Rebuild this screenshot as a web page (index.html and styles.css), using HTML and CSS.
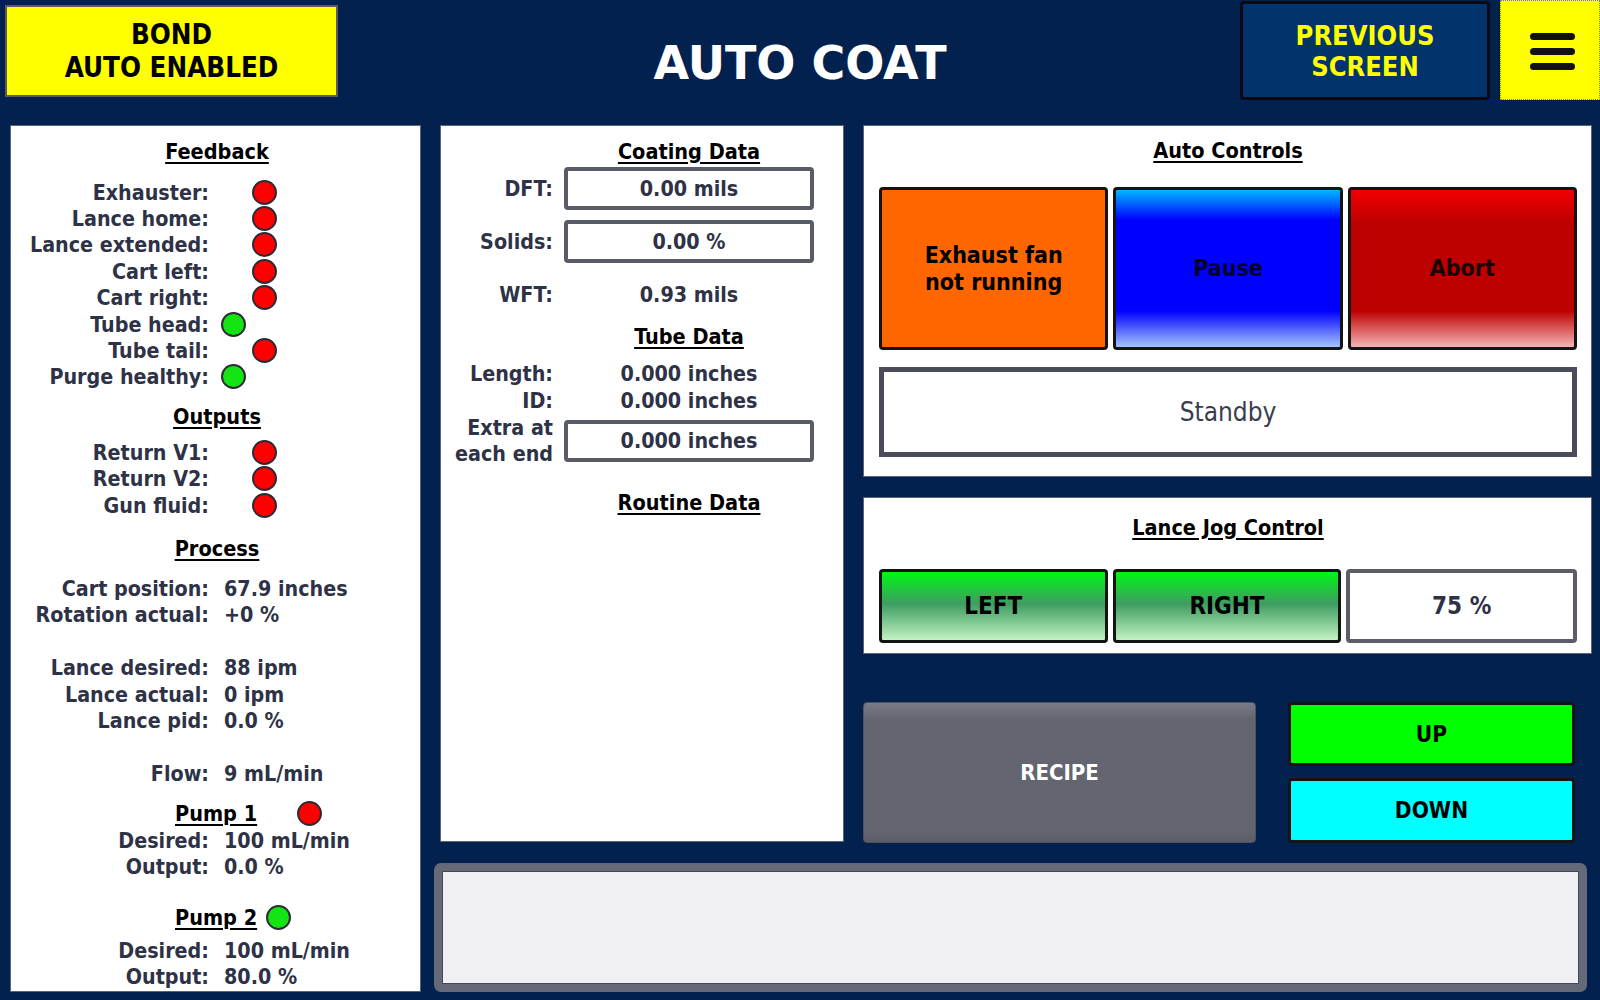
FILE: index.html
```html
<!DOCTYPE html>
<html lang="en">
<head>
    <meta charset="UTF-8">
    <meta name="viewport" content="width=device-width, initial-scale=1.0">
    <title>Auto Coat</title>
    <link rel="stylesheet" href="styles.css">
</head>
<body>

    <!-- Top bar -->
    <header class="topbar">
        <div class="mode-badge">BOND<br>AUTO ENABLED</div>
        <h1 class="screen-title">AUTO COAT</h1>
        <button class="prev-btn">PREVIOUS<br>SCREEN</button>
        <button class="menu-btn" aria-label="Menu">
            <span></span><span></span><span></span>
        </button>
    </header>

    <main class="workspace">

        <!-- Feedback / outputs / process values -->
        <section class="panel status-panel">
            <div class="group-title">Feedback</div>
            <div class="status-row"><span class="label">Exhauster:</span><span class="led off"></span></div>
            <div class="status-row"><span class="label">Lance home:</span><span class="led off"></span></div>
            <div class="status-row"><span class="label">Lance extended:</span><span class="led off"></span></div>
            <div class="status-row"><span class="label">Cart left:</span><span class="led off"></span></div>
            <div class="status-row"><span class="label">Cart right:</span><span class="led off"></span></div>
            <div class="status-row"><span class="label">Tube head:</span><span class="led on"></span></div>
            <div class="status-row"><span class="label">Tube tail:</span><span class="led off"></span></div>
            <div class="status-row"><span class="label">Purge healthy:</span><span class="led on"></span></div>

            <div class="group-title outputs">Outputs</div>
            <div class="status-row"><span class="label">Return V1:</span><span class="led off"></span></div>
            <div class="status-row"><span class="label">Return V2:</span><span class="led off"></span></div>
            <div class="status-row"><span class="label">Gun fluid:</span><span class="led off"></span></div>

            <div class="group-title process">Process</div>
            <div class="status-row"><span class="label">Cart position:</span><span class="value">67.9 inches</span></div>
            <div class="status-row"><span class="label">Rotation actual:</span><span class="value">+0 %</span></div>
            <div class="status-row spacer"></div>
            <div class="status-row"><span class="label">Lance desired:</span><span class="value">88 ipm</span></div>
            <div class="status-row"><span class="label">Lance actual:</span><span class="value">0 ipm</span></div>
            <div class="status-row"><span class="label">Lance pid:</span><span class="value">0.0 %</span></div>
            <div class="status-row spacer"></div>
            <div class="status-row"><span class="label">Flow:</span><span class="value">9 mL/min</span></div>

            <div class="pump-title pump-1"><span>Pump 1</span><span class="led off"></span></div>
            <div class="status-row"><span class="label">Desired:</span><span class="value">100 mL/min</span></div>
            <div class="status-row"><span class="label">Output:</span><span class="value">0.0 %</span></div>

            <div class="pump-title pump-2"><span>Pump 2</span><span class="led on"></span></div>
            <div class="status-row"><span class="label">Desired:</span><span class="value">100 mL/min</span></div>
            <div class="status-row"><span class="label">Output:</span><span class="value">80.0 %</span></div>
        </section>

        <div class="right-area">
            <div class="upper">

                <!-- Coating / tube / routine data -->
                <section class="panel data-panel">
                    <div class="field title-row"><span></span><span class="group-title">Coating Data</span></div>
                    <div class="field box-row"><span class="label">DFT:</span><span class="entry">0.00 mils</span></div>
                    <div class="field box-row gap-s"><span class="label">Solids:</span><span class="entry">0.00 %</span></div>
                    <div class="field text-row wft"><span class="label">WFT:</span><span class="value">0.93 mils</span></div>

                    <div class="field title-row tube"><span></span><span class="group-title">Tube Data</span></div>
                    <div class="field text-row length"><span class="label">Length:</span><span class="value">0.000 inches</span></div>
                    <div class="field text-row"><span class="label">ID:</span><span class="value">0.000 inches</span></div>
                    <div class="field box-row extra"><span class="label">Extra at<br>each end</span><span class="entry">0.000 inches</span></div>

                    <div class="field title-row routine"><span></span><span class="group-title">Routine Data</span></div>
                </section>

                <div class="control-column">
                    <section class="panel auto-panel">
                        <div class="group-title">Auto Controls</div>
                        <div class="button-row">
                            <button class="hmi-btn fault">Exhaust fan<br>not running</button>
                            <button class="hmi-btn pause">Pause</button>
                            <button class="hmi-btn abort">Abort</button>
                        </div>
                        <div class="state-box">Standby</div>
                    </section>

                    <section class="panel jog-panel">
                        <div class="group-title">Lance Jog Control</div>
                        <div class="button-row">
                            <button class="hmi-btn jog">LEFT</button>
                            <button class="hmi-btn jog">RIGHT</button>
                            <div class="speed-box">75 %</div>
                        </div>
                    </section>

                    <div class="action-row">
                        <button class="recipe-btn">RECIPE</button>
                        <div class="updown">
                            <button class="hmi-btn up">UP</button>
                            <button class="hmi-btn down">DOWN</button>
                        </div>
                    </div>
                </div>
            </div>

            <!-- Alarm / message line -->
            <div class="message-box"></div>
        </div>
    </main>

</body>
</html>
```

FILE: styles.css
```css
body {
    margin: 0;
    width: 1600px;
    height: 1000px;
    background-color: #02214f;
    font-family: "DejaVu Sans Condensed", "DejaVu Sans", sans-serif;
    font-weight: bold;
    color: #2e3246;
    overflow: hidden;
}

button {
    font-family: inherit;
    font-weight: bold;
    cursor: pointer;
}

/* Top bar */
.topbar {
    display: flex;
    align-items: flex-start;
    height: 125px;
}

.mode-badge {
    margin: 5px 0 0 5px;
    width: 329px;
    height: 88px;
    background-color: #ffff00;
    border: 2px solid #5c5c5c;
    color: #000;
    font-size: 27.5px;
    line-height: 33px;
    text-align: center;
    display: flex;
    align-items: center;
    justify-content: center;
}

.screen-title {
    flex: 1;
    margin: 38px 0 0 22px;
    font-family: "DejaVu Sans", sans-serif;
    font-size: 46px;
    line-height: 50px;
    color: #fff;
    text-align: center;
}

.prev-btn {
    margin: 1px 10px 0 0;
    width: 250px;
    height: 99px;
    background-color: #02336a;
    border: 3px solid #050a14;
    border-radius: 4px;
    color: #ffff00;
    font-size: 27px;
    line-height: 31px;
}

.menu-btn {
    width: 100px;
    height: 100px;
    background-color: #ffff00;
    border: 1px dotted #6f6fd8;
    display: flex;
    flex-direction: column;
    align-items: center;
    justify-content: center;
    gap: 8px;
    padding: 3px 0 0 4px;
}

.menu-btn span {
    display: block;
    width: 45px;
    height: 7px;
    border-radius: 4px;
    background-color: #111;
}

/* Main area */
.workspace {
    display: flex;
    gap: 19px;
    padding-left: 10px;
}

.panel {
    background-color: #fff;
    border: 1px solid #5d6274;
    box-sizing: border-box;
}

.group-title {
    color: #000;
    text-decoration: underline;
    text-underline-offset: 3px;
    font-size: 21.5px;
    line-height: 26px;
    text-align: center;
}

/* Left status panel */
.status-panel {
    width: 411px;
    height: 867px;
    padding-top: 13px;
}

.status-panel .group-title {
    width: 412px;
    margin-bottom: 14px;
}

.status-panel .group-title.outputs {
    margin-top: 14px;
    margin-bottom: 9px;
}

.status-panel .group-title.process {
    margin-top: 18px;
    margin-bottom: 13px;
}

.status-row {
    display: flex;
    align-items: center;
    height: 26.4px;
    font-size: 21.3px;
}

.status-row .label {
    width: 198px;
    text-align: right;
}

.status-row .value {
    margin-left: 15px;
}

.led {
    width: 21px;
    height: 21px;
    border-radius: 50%;
    border: 2px solid #2b2b36;
}

.led.off {
    background-color: #ff0000;
    margin-left: 43px;
}

.led.on {
    background-color: #14e414;
    margin-left: 12px;
}

.pump-title {
    display: flex;
    align-items: center;
    height: 26.4px;
    padding-left: 164px;
    color: #000;
    font-size: 21.5px;
    margin-top: 14px;
}

.pump-title span:first-child {
    text-decoration: underline;
    text-underline-offset: 3px;
}

.pump-title.pump-1 .led.off {
    margin-left: 40px;
}

.pump-title.pump-2 {
    margin-top: 25px;
    margin-bottom: 6px;
}

.pump-title.pump-2 .led.on {
    margin-left: 9px;
}

/* Right hand area */
.right-area {
    display: flex;
    flex-direction: column;
    gap: 20px;
}

.upper {
    display: flex;
    gap: 19px;
}

/* Data panel */
.data-panel {
    width: 404px;
    height: 717px;
    padding-top: 13px;
}

.field {
    display: grid;
    grid-template-columns: 112px 250px;
    column-gap: 11px;
    align-items: center;
    font-size: 21.3px;
}

.field .label {
    text-align: right;
}

.field .value {
    text-align: center;
}

.field.title-row {
    height: 26px;
}

.field.box-row {
    height: 43px;
    margin-top: 2px;
}

.field.box-row.gap-s {
    margin-top: 10px;
}

.entry {
    box-sizing: border-box;
    height: 43px;
    border: 4px solid #595b67;
    border-radius: 4px;
    background-color: #fff;
    display: flex;
    align-items: center;
    justify-content: center;
}

.field.text-row {
    height: 27px;
}

.field.wft {
    margin-top: 18px;
}

.field.title-row.tube {
    margin-top: 16px;
}

.field.length {
    margin-top: 10px;
}

.field.box-row.extra {
    height: 52px;
    margin-top: 1px;
    line-height: 26px;
}

.field.box-row.extra .entry {
    height: 42px;
}

.field.title-row.routine {
    margin-top: 23px;
}

/* Control column */
.control-column {
    width: 729px;
    display: flex;
    flex-direction: column;
}

.auto-panel {
    height: 352px;
    padding: 12px 14px 0 15px;
}

.button-row {
    display: flex;
    gap: 5px;
}

.auto-panel .button-row {
    margin-top: 23px;
    height: 163px;
}

.hmi-btn {
    flex: 1;
    border: 3px solid #141414;
    border-radius: 4px;
    font-size: 23px;
    line-height: 27px;
    color: #000;
    padding: 0;
}

.hmi-btn.fault {
    background-color: #ff6600;
}

.hmi-btn.pause {
    background: linear-gradient(to bottom, #00b8ff 0%, #0000ff 19%, #0000ff 77%, #a4c4ff 100%);
    color: #000028;
}

.hmi-btn.abort {
    background: linear-gradient(to bottom, #f20000 0%, #bd0000 21%, #bd0000 77%, #f6b4b4 100%);
    color: #1c0000;
}

.state-box {
    margin-top: 17px;
    height: 90px;
    box-sizing: border-box;
    border: 5px solid #4a4c59;
    display: flex;
    align-items: center;
    justify-content: center;
    font-weight: normal;
    font-size: 26px;
    color: #3a3d50;
}

.jog-panel {
    margin-top: 20px;
    height: 157px;
    padding: 17px 14px 0 15px;
}

.jog-panel .button-row {
    margin-top: 28px;
    height: 74px;
}

.hmi-btn.jog {
    background: linear-gradient(to bottom, #00f614 0%, #3f9d62 47%, #c2f2c2 100%);
    font-size: 24px;
}

.speed-box {
    flex: 1;
    box-sizing: border-box;
    border: 4px solid #5b5d68;
    border-radius: 4px;
    display: flex;
    align-items: center;
    justify-content: center;
    font-size: 24px;
    color: #2e3246;
}

.action-row {
    margin-top: 48px;
    display: flex;
    height: 141px;
}

.recipe-btn {
    width: 393px;
    height: 141px;
    background: linear-gradient(to bottom, #787a88 0%, #636570 12%, #636570 92%, #5a5c66 100%);
    border: 1px solid #4f515c;
    border-radius: 4px;
    color: #fff;
    font-size: 22px;
}

.updown {
    margin-left: 32px;
    width: 287px;
    display: flex;
    flex-direction: column;
    gap: 12px;
}

.hmi-btn.up {
    background-color: #00ff00;
    height: 64px;
    flex: none;
    font-size: 22.5px;
}

.hmi-btn.down {
    background-color: #00ffff;
    height: 65px;
    flex: none;
    font-size: 22.5px;
}

/* Message line */
.message-box {
    margin-left: -6px;
    width: 1153px;
    height: 129px;
    box-sizing: border-box;
    background-color: #f0f0f3;
    border: 8px solid #666977;
    border-radius: 7px;
    box-shadow: inset 0 0 0 1px #44475a;
}
```
